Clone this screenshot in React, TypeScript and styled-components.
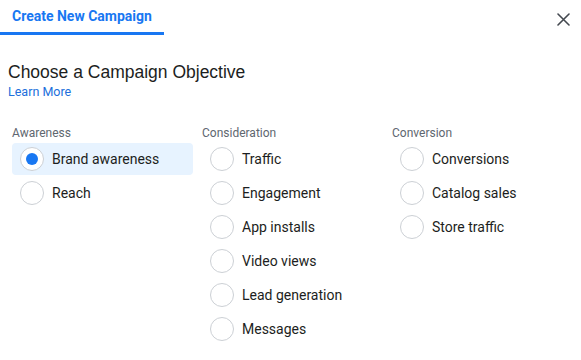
import styled, { createGlobalStyle } from "styled-components";

const GlobalStyle = createGlobalStyle`
  html, body {
    margin: 0;
    padding: 0;
    background: #ffffff;
  }
  body {
    font-family: Roboto, "Liberation Sans", Arial, sans-serif;
    color: #1c1e21;
  }
`;

const Page = styled.div`
  width: 581px;
  height: 360px;
  overflow: hidden;
  display: flex;
  flex-direction: column;
`;

const TabBar = styled.div`
  display: flex;
  justify-content: space-between;
  align-items: flex-start;
  height: 36px;
`;

const Tab = styled.div`
  width: 164px;
  height: 35px;
  box-sizing: border-box;
  padding: 8px 0 0 12px;
  border-bottom: 3px solid #1877f2;
  font-family: Roboto, Arial, sans-serif;
  font-weight: 700;
  font-size: 14px;
  color: #1877f2;
`;

const CloseButton = styled.button`
  margin: 11px 10px 0 0;
  width: 16px;
  height: 16px;
  padding: 0;
  border: none;
  background: none;
  display: flex;
  align-items: center;
  justify-content: center;
`;

const Header = styled.div`
  padding: 25px 8px 0 8px;
  display: flex;
  flex-direction: column;
`;

const Title = styled.h1`
  margin: 0;
  font-family: "Liberation Sans", Arial, sans-serif;
  font-weight: 400;
  font-size: 17.5px;
  line-height: 22px;
  color: #1c1e21;
`;

const LearnMore = styled.a`
  font-size: 12.5px;
  line-height: 17px;
  color: #216fdb;
  text-decoration: none;
  cursor: pointer;
`;

const Columns = styled.div`
  display: grid;
  grid-template-columns: repeat(3, 190px);
  padding: 25px 0 0 12px;
`;

const Column = styled.div`
  display: flex;
  flex-direction: column;
  gap: 2px;
`;

const ColumnLabel = styled.div`
  font-size: 12px;
  line-height: 16px;
  color: #606770;
`;

const Option = styled.label<{ $selected?: boolean }>`
  display: flex;
  align-items: center;
  gap: 8px;
  width: 181px;
  height: 32px;
  box-sizing: border-box;
  padding-left: 8px;
  border-radius: 4px;
  background: ${(p) => (p.$selected ? "#e7f3ff" : "transparent")};
  font-size: 14px;
  color: #1c1e21;
  cursor: pointer;
`;

const Radio = styled.span<{ $checked?: boolean }>`
  width: 24px;
  height: 24px;
  box-sizing: border-box;
  border-radius: 50%;
  border: 1px solid #ccd0d5;
  background: #ffffff;
  display: flex;
  align-items: center;
  justify-content: center;
  flex-shrink: 0;

  &::after {
    content: "";
    width: 12px;
    height: 12px;
    border-radius: 50%;
    background: ${(p) => (p.$checked ? "#1877f2" : "transparent")};
  }
`;

const groups = [
  { label: "Awareness", options: ["Brand awareness", "Reach"] },
  {
    label: "Consideration",
    options: [
      "Traffic",
      "Engagement",
      "App installs",
      "Video views",
      "Lead generation",
      "Messages",
    ],
  },
  {
    label: "Conversion",
    options: ["Conversions", "Catalog sales", "Store traffic"],
  },
];

export default function App() {
  const selected = "Brand awareness";

  return (
    <Page>
      <GlobalStyle />
      <TabBar>
        <Tab>Create New Campaign</Tab>
        <CloseButton aria-label="Close">
          <svg width="13" height="13" viewBox="0 0 13 13">
            <path
              d="M1 1 L12 12 M12 1 L1 12"
              stroke="#444950"
              strokeWidth="1.6"
              strokeLinecap="round"
            />
          </svg>
        </CloseButton>
      </TabBar>
      <Header>
        <Title>Choose a Campaign Objective</Title>
        <LearnMore>Learn More</LearnMore>
      </Header>
      <Columns>
        {groups.map((group) => (
          <Column key={group.label}>
            <ColumnLabel>{group.label}</ColumnLabel>
            {group.options.map((opt) => (
              <Option key={opt} $selected={opt === selected}>
                <Radio $checked={opt === selected} />
                {opt}
              </Option>
            ))}
          </Column>
        ))}
      </Columns>
    </Page>
  );
}
